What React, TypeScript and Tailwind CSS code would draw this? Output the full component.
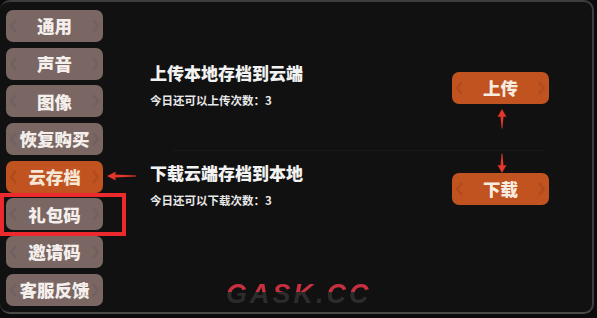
import React from 'react';

const FONT = { fontFamily: '"Noto Sans CJK SC", "Noto Sans", sans-serif' };

const menu = ['通用', '声音', '图像', '恢复购买', '云存档', '礼包码', '邀请码', '客服反馈'];

const Chevrons: React.FC<{ color: string }> = ({ color }) => (
  <>
    <svg className="absolute left-[3px] top-1/2 -translate-y-1/2" width="9" height="14" viewBox="0 0 9 14">
      <path d="M7 1 L2 7 L7 13" stroke={color} strokeWidth="2.5" fill="none" />
    </svg>
    <svg className="absolute right-[3px] top-1/2 -translate-y-1/2" width="9" height="14" viewBox="0 0 9 14">
      <path d="M2 1 L7 7 L2 13" stroke={color} strokeWidth="2.5" fill="none" />
    </svg>
  </>
);

const MenuButton: React.FC<{ label: string; active?: boolean }> = ({ label, active }) => (
  <div
    className={`relative flex h-8 w-[97px] items-center justify-center rounded-[7px] text-[17.5px] font-black leading-none ${
      active ? 'bg-[#c0531f] text-[#f6e6d6]' : 'bg-[#7a6763] text-[#f4efec]'
    }`}
  >
    <Chevrons color={active ? '#b04b1d' : '#716060'} />
    <span className="relative">{label}</span>
  </div>
);

const ActionButton: React.FC<{ label: string }> = ({ label }) => (
  <div className="relative flex h-8 w-[97px] items-center justify-center rounded-[7px] bg-[#c0531f] text-[17.5px] font-black leading-none text-[#f8ece0]">
    <Chevrons color="#b04b1d" />
    <span className="relative">{label}</span>
  </div>
);

const RedArrow: React.FC<{ dir: 'up' | 'down' | 'left'; className: string }> = ({ dir, className }) => {
  if (dir === 'left') {
    return (
      <svg className={className} width="30" height="10" viewBox="0 0 30 10">
        <path d="M0 5 L9 0.5 L8 3.5 L29 4.6 L29 5.4 L8 6.5 L9 9.5 Z" fill="#e2372a" />
      </svg>
    );
  }
  return (
    <svg className={className} width="10" height="20" viewBox="0 0 10 20" style={dir === 'down' ? { transform: 'rotate(180deg)' } : undefined}>
      <path d="M5 0 L9.5 8 L6.5 7.5 L5.4 19.5 L4.6 19.5 L3.5 7.5 L0.5 8 Z" fill="#e2372a" />
    </svg>
  );
};

export default function App() {
  return (
    <div className="relative h-[318px] w-[597px] overflow-hidden bg-[#0b0b0b] text-white" style={FONT}>
      <div className="absolute inset-0 mb-[4px] mr-[3px] flex rounded-[10px] border-2 border-l-0 border-[#3d3d3d] border-b-[#4a4a4a] bg-[#111111]">
        {/* sidebar */}
        <div className="flex flex-col gap-[5.7px] pl-[6px] pt-[8px]">
          {menu.map((m) => (
            <MenuButton key={m} label={m} active={m === '云存档'} />
          ))}
        </div>

        {/* content */}
        <div className="flex flex-1 flex-col pl-[47px] pr-[43px] pt-[60px]">
          <div className="flex items-start justify-between">
            <div className="flex flex-col">
              <div className="text-[17px] font-black leading-[22px] text-[#f2f2f2]">上传本地存档到云端</div>
              <div className="mt-[8px] text-[11.5px] font-bold leading-[16px] text-[#e8e8e8]">今日还可以上传次数：3</div>
            </div>
            <div className="mt-[10px]">
              <ActionButton label="上传" />
            </div>
          </div>
          <div className="ml-[22px] mr-[5px] mt-[42px] h-px bg-[#181818]" />
          <div className="mt-[11px] flex items-start justify-between">
            <div className="flex flex-col">
              <div className="text-[17px] font-black leading-[22px] text-[#f2f2f2]">下载云端存档到本地</div>
              <div className="mt-[8px] text-[11.5px] font-bold leading-[16px] text-[#e8e8e8]">今日还可以下载次数：3</div>
            </div>
            <div className="mt-[11px]">
              <ActionButton label="下载" />
            </div>
          </div>
        </div>
      </div>

      {/* annotations */}
      <RedArrow dir="left" className="absolute left-[107px] top-[171px]" />
      <RedArrow dir="up" className="absolute left-[497px] top-[109px]" />
      <RedArrow dir="down" className="absolute left-[497px] top-[153px]" />
      <div className="absolute left-0 top-[193px] h-[43px] w-[126px] border-4 border-[#ec2a2e]" />

      {/* watermark */}
      <div
        className="absolute left-[226px] top-[279px] bg-[linear-gradient(to_bottom,#c8303f_0%,#c8303f_45%,#2c2c2c_45%,#2c2c2c_100%)] bg-clip-text text-[27px] font-black italic leading-[30px] tracking-[3px] text-transparent"
        style={{ fontFamily: '"Liberation Sans", sans-serif' }}
      >
        GASK.CC
      </div>
    </div>
  );
}
